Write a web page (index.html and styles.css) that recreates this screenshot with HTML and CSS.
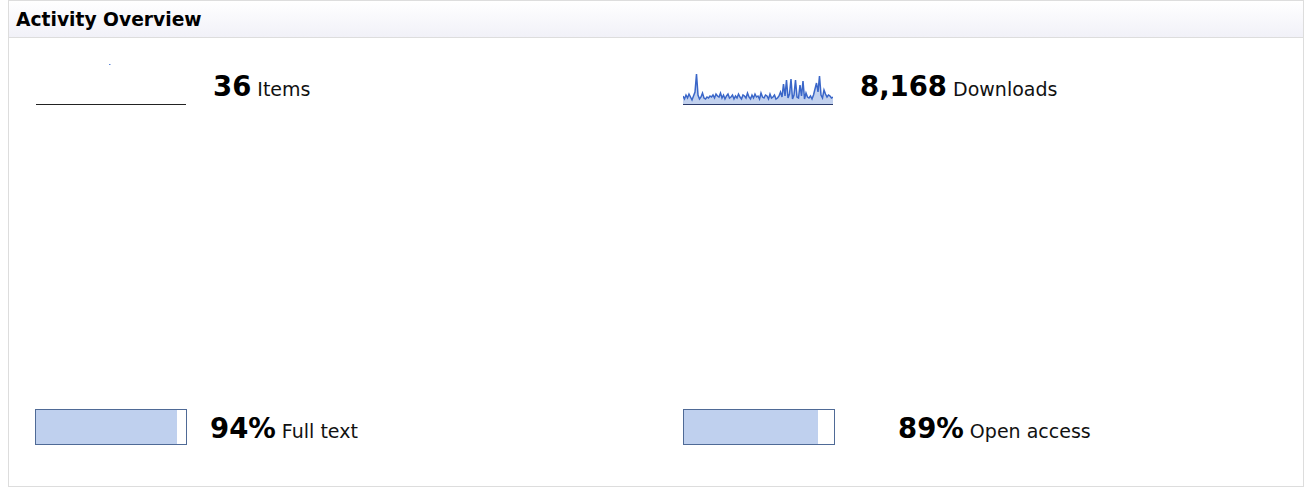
FILE: index.html
```html
<!DOCTYPE html>
<html lang="en">
<head>
    <meta charset="UTF-8">
    <meta name="viewport" content="width=device-width, initial-scale=1.0">
    <title>Activity Overview</title>
    <link rel="stylesheet" href="styles.css">
</head>
<body>
    <div class="panel">
        <div class="panel-header">Activity Overview</div>
        <div class="stats">
            <div class="stat">
                <svg class="spark" width="150" height="44" viewBox="0 0 100 44" preserveAspectRatio="none">
                    <rect x="48.8" y="2" width="0.8" height="1" fill="#3366cc"/>
                    <line x1="0" y1="42.5" x2="100" y2="42.5" stroke="#222" stroke-width="1" vector-effect="non-scaling-stroke"/>
                </svg>
                <div class="stat-text"><span class="num">36</span> Items</div>
            </div>
            <div class="stat">
                <svg class="spark" width="150" height="44" viewBox="0 0 100 44" preserveAspectRatio="none">
                    <g transform="translate(0,8)">
                        <polygon class="spark-fill" points="0,26 1,29 2,25 3,28 4,24 5,27 6,30 7,26 8,22 9,4 10,25 11,29 12,27 13,23 14,28 15,29 16,27 17,28 18,26 19,27 20,25 21,28 22,24 23,26 24,27 25,23 26,28 27,25 28,29 29,26 30,24 31,28 32,27 33,25 34,29 35,26 36,28 37,24 38,27 39,29 40,25 41,26 42,28 43,23 44,27 45,29 46,25 47,28 48,24 49,27 50,26 51,29 52,23 53,27 54,28 55,25 56,26 57,29 58,24 59,28 60,27 61,25 62,29 63,28 64,26 65,22 66,27 67,14 68,26 69,10 70,28 71,24 72,9 73,29 74,25 75,10 76,27 77,28 78,15 79,26 80,11 81,29 82,23 83,27 84,28 85,26 86,29 87,25 88,19 89,13 90,22 91,6 92,25 93,28 94,20 95,24 96,27 97,25 98,26 99,28 100,27 100,34 0,34"/>
                        <polyline class="spark-line" vector-effect="non-scaling-stroke" points="0,26 1,29 2,25 3,28 4,24 5,27 6,30 7,26 8,22 9,4 10,25 11,29 12,27 13,23 14,28 15,29 16,27 17,28 18,26 19,27 20,25 21,28 22,24 23,26 24,27 25,23 26,28 27,25 28,29 29,26 30,24 31,28 32,27 33,25 34,29 35,26 36,28 37,24 38,27 39,29 40,25 41,26 42,28 43,23 44,27 45,29 46,25 47,28 48,24 49,27 50,26 51,29 52,23 53,27 54,28 55,25 56,26 57,29 58,24 59,28 60,27 61,25 62,29 63,28 64,26 65,22 66,27 67,14 68,26 69,10 70,28 71,24 72,9 73,29 74,25 75,10 76,27 77,28 78,15 79,26 80,11 81,29 82,23 83,27 84,28 85,26 86,29 87,25 88,19 89,13 90,22 91,6 92,25 93,28 94,20 95,24 96,27 97,25 98,26 99,28 100,27"/>
                    </g>
                    <line x1="0" y1="42.5" x2="100" y2="42.5" stroke="#2a3a6a" stroke-width="1" vector-effect="non-scaling-stroke"/>
                </svg>
                <div class="stat-text"><span class="num">8,168</span> Downloads</div>
            </div>
            <div class="stat">
                <div class="bar"><div class="bar-fill" style="width: 94%"></div></div>
                <div class="stat-text stat-text-bar"><span class="num">94%</span> Full text</div>
            </div>
            <div class="stat stat-right">
                <div class="bar"><div class="bar-fill" style="width: 89%"></div></div>
                <div class="stat-text stat-text-wide"><span class="num">89%</span> Open access</div>
            </div>
        </div>
    </div>
</body>
</html>
```

FILE: styles.css
```css
body {
    margin: 0 8px 8px;
    font-family: 'DejaVu Sans', Verdana, sans-serif;
    color: #111;
    background-color: #fff;
}
.panel {
    border: 1px solid #ddd;
    height: 485px;
}
.panel-header {
    height: 36px;
    line-height: 38px;
    padding-left: 7px;
    font-size: 18.7px;
    font-weight: bold;
    color: #000;
    background: linear-gradient(#ffffff, #f1f1f8);
    border-bottom: 1px solid #ddd;
}
.stats {
    display: grid;
    grid-template-columns: 1fr 1fr;
    align-content: space-between;
    height: 383px;
    padding: 24px 0 0;
}
.stat {
    display: flex;
    align-items: center;
    padding-left: 26px;
}
.stat-right {
    padding-left: 27px;
}
.spark {
    display: block;
    flex-shrink: 0;
    margin-left: 1px;
}
.spark-fill {
    fill: #c2d1ee;
}
.spark-line {
    fill: none;
    stroke: #3a66c8;
    stroke-width: 1.5;
}
.stat-text {
    margin-left: 27px;
    font-size: 19px;
    padding-top: 3px;
}
.stat-text-bar {
    margin-left: 23px;
    padding-top: 1px;
}
.stat-text-wide {
    margin-left: 63px;
    padding-top: 1px;
}
.num {
    font-size: 27.5px;
    font-weight: bold;
    color: #000;
}
.bar {
    width: 150px;
    height: 34px;
    border: 1px solid #4f6a96;
    background-color: #fff;
    flex-shrink: 0;
}
.bar-fill {
    height: 100%;
    background-color: #bfd0ee;
}
```
